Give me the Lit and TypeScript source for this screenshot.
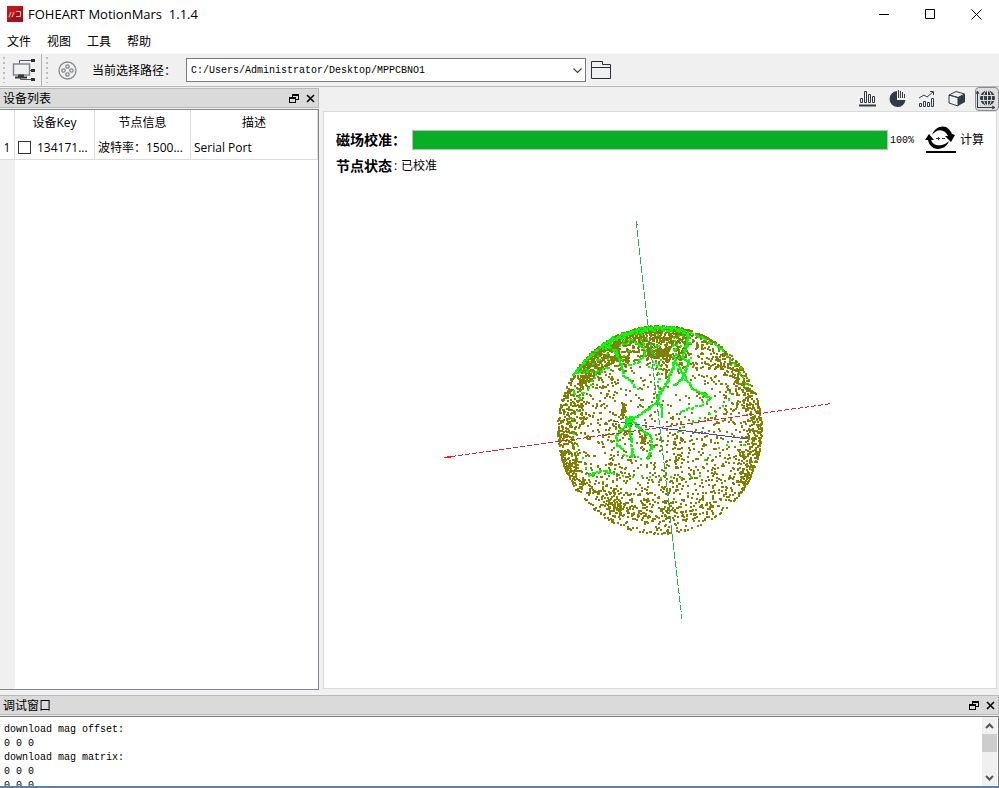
import { LitElement, html, svg, css } from "lit";
import { customElement } from "lit/decorators.js";

type Point = [number, number];

// Small seeded generator, so the cloud looks the same on every load.
function seeded(seed: number) {
  let s = seed;
  return () => {
    s = (s + 0x6d2b79f5) | 0;
    let t = Math.imul(s ^ (s >>> 15), 1 | s);
    t = (t + Math.imul(t ^ (t >>> 7), 61 | t)) ^ t;
    return ((t ^ (t >>> 14)) >>> 0) / 4294967296;
  };
}

const RADIUS = 102;
const square = (x: number, y: number, s = 2) =>
  `M${Math.round(x)} ${Math.round(y)}h${s}v${s}h-${s}z`;

function samples(): string {
  const rnd = seeded(71);
  const out: string[] = [];
  const put = (x: number, y: number) => {
    const d = Math.hypot(x, y);
    if (d > RADIUS) return;
    // the lower rim is sparse
    if (d > 92 && y > 55 && Math.abs(x) < 78 && rnd() < 0.55) return;
    out.push(square(x - 1, y * 1.02 - 1));
  };
  // even spread over the sphere's surface
  for (let i = 0; i < 2600; i++) {
    const z = rnd() * 2 - 1;
    const a = rnd() * Math.PI * 2;
    const r = RADIUS * Math.sqrt(1 - z * z);
    const x = r * Math.cos(a);
    const y = r * Math.sin(a);
    if (Math.hypot(x - 5, y + 35) < 45 && rnd() < 0.4) continue;
    put(x, y);
  }
  // rim
  for (let i = 0; i < 480; i++) {
    const a = rnd() * Math.PI * 2;
    const r = RADIUS - 14 * rnd();
    if (a > 0.8 && a < 2.5) continue;
    put(r * Math.cos(a), r * Math.sin(a));
  }
  // dense cap at the upper left
  for (let i = 0; i < 800; i++) {
    const x = -82 + rnd() * 108;
    const top = -Math.sqrt(RADIUS * RADIUS - x * x);
    const y = top + rnd() * (x < -40 ? 26 : 32);
    if (Math.hypot((x + 28) / 12, (y + 78) / 8) < 1 && rnd() < 0.7) continue;
    put(x, y);
  }
  // clumps: centre x, centre y, spread x, spread y, count
  const clumps = [
    [-1, -76, 11, 4, 70], [-36, -19, 2, 8, 26], [-17, 9, 3, 5, 20],
    [5, -62, 4, 12, 30], [-48, 68, 9, 14, 50], [-32, 78, 20, 9, 50],
    [-90, 24, 7, 24, 60], [86, 42, 7, 22, 60], [45, -63, 26, 3, 46],
    [18, 30, 5, 30, 40], [-82, -16, 8, 14, 36], [84, -42, 9, 22, 40],
    [0, 80, 50, 10, 80],
  ];
  for (const [cx, cy, sx, sy, n] of clumps) {
    for (let i = 0; i < n; i++) {
      put(cx + (rnd() * 2 - 1) * sx, cy + (rnd() * 2 - 1) * sy);
    }
  }
  return out.join("");
}

// Recorded motion trails: step between dots, scatter, then the vertices.
const TRAILS: [number, number, Point[]][] = [
  [1, 1, [[-87, -57], [-72, -74], [-57, -87], [-40, -96], [-20, -102], [-3, -104], [13, -103], [24, -98]]],
  [1, 2, [[-57, -85], [-40, -94], [-20, -100], [-3, -102], [16, -102], [22, -99]]],
  [2, 1, [[24, -99], [38, -94], [53, -87], [62, -80]]],
  [5, 2, [[62, -80], [78, -62], [90, -40]]],
  [1, 1, [[-57, -86], [-45, -80], [-40, -67], [-37, -55], [-30, -50]]],
  [2, 1, [[-30, -50], [-23, -40]]],
  [2, 1, [[-40, -85], [-30, -91], [-18, -85], [-16, -77], [-22, -68], [-33, -65]]],
  [1, 1, [[27, -98], [25, -83], [21, -73], [28, -70], [22, -53], [13, -45]]],
  [2, 2, [[15, -92], [13, -70]]],
  [1, 1, [[13, -70], [20, -60], [32, -42]]],
  [1, 1, [[32, -42], [50, -33]]],
  [2, 1, [[50, -32], [40, -26], [18, -19]]],
  [1, 1, [[14, -70], [8, -52], [-3, -33], [-4, -28], [-23, -15], [-32, -10]]],
  [1, 0, [[-3, -30], [1, -22], [1, -13]]],
  [3, 2, [[-12, -62], [-4, -70], [-2, -54], [0, -35]]],
  [1, 4, [[-34, -10], [-29, -9]]],
  [1, 1, [[-33, -8], [-45, 5], [-43, 14], [-38, 20]]],
  [1, 1, [[-33, -8], [-30, 10], [-28, 26]]],
  [1, 1, [[-27, -8], [-10, 6], [-9, 16], [-13, 29]]],
  [4, 2, [[-36, 24], [-26, 23], [-14, 29]]],
  [1, 1, [[-72, 44], [-57, 40], [-47, 43]]],
  [9, 1, [[-47, 44], [-10, 46], [30, 47], [50, 43]]],
  [2, 1, [[-87, -57], [-74, -60], [-66, -58], [-50, -64]]],
  [3, 2, [[-88, -40], [-82, -31], [-70, -46], [-62, -60]]],
  [4, 3, [[-78, -62], [-64, -72], [-52, -76]]],
  [8, 3, [[-86, -20], [-88, 0], [-84, 22], [-70, 42]]],
  [7, 3, [[70, -38], [58, -22], [40, -14], [14, 6]]],
  [9, 6, [[48, 28], [60, 18], [86, 8]]],
];

function trails(): string {
  const rnd = seeded(9);
  const out: string[] = [];
  const put = (x: number, y: number) => {
    if (Math.hypot(x, y / 1.02) <= RADIUS + 3) out.push(square(x, y));
  };
  for (const [step, jitter, pts] of TRAILS) {
    for (let i = 1; i < pts.length; i++) {
      const [x0, y0] = pts[i - 1];
      const [x1, y1] = pts[i];
      const n = Math.max(1, Math.round(Math.hypot(x1 - x0, y1 - y0) / step));
      for (let k = 0; k < n; k++) {
        const t = k / n;
        put(
          x0 + (x1 - x0) * t + (rnd() * 2 - 1) * jitter,
          y0 + (y1 - y0) * t + (rnd() * 2 - 1) * jitter
        );
      }
    }
  }
  for (let i = 0; i < 22; i++) put(-36 + rnd() * 9, -14 + rnd() * 6);
  for (let i = 0; i < 45; i++) put(-70 + rnd() * 110, -96 + rnd() * 26);
  return out.join("");
}

@customElement("magnetic-sphere")
class MagneticSphere extends LitElement {
  static styles = css`
    :host { display: block; }
    svg { display: block; width: 440px; height: 410px; max-width: 100%; }
  `;
  render() {
    return html`<svg viewBox="-220 -215 440 410" role="img" aria-label="磁场校准" shape-rendering="crispEdges" fill="none">
      <path d=${samples()} fill="#808000"></path>
      <path d=${trails()} fill="#00ff00"></path>
      <path d="M-24-209L22 189" stroke="#22b14c" stroke-dasharray="7 2"></path>
      <path d="M-24-206h2" stroke="#22b14c"></path>
      <path d="M-216 27.500L172-26.500" stroke="#ed1c24" stroke-dasharray="5 2"></path>
      <path d="M-216 27.500h7M-213 26.500h4" stroke="#ed1c24"></path>
      <path d="M-46-8.500L16 0" stroke="#3f48cc" stroke-dasharray="5 2"></path>
      <path d="M10-1L88 9" stroke="#3f48cc"></path>
    </svg>`;
  }
}

const floatIcon = svg`<path d="M3.500 3V.500h6v5H7M.500 3.500h6v5h-6z" stroke="#000"/><path d="M3 1h7M0 4h7" stroke="#000" stroke-width="2"/>`;
const crossIcon = svg`<path d="M1 1l7 7M8 1l-7 7" stroke="#000" stroke-width="1.600"/>`;

@customElement("dock-title")
class DockTitle extends LitElement {
  static properties = { label: { type: String } };
  declare label: string;
  static styles = css`
    :host { display: block; }
    .bar {
      display: flex; align-items: center; box-sizing: border-box; height: 20px;
      padding: 0 0 0 3px; background: #dadada; border: 1px solid #b9b9b9; border-left: 0;
    }
    h2 { flex: 1; margin: 0; padding-top: 2px; font-size: 12px; font-weight: 400; line-height: 16px; }
    button { width: 16px; height: 16px; padding: 0; border: 0; background: none; display: grid; place-items: center; }
  `;
  render() {
    return html`<div class="bar">
      <h2>${this.label}</h2>
      <button aria-label="浮动"><svg width="10" height="9" fill="none" shape-rendering="crispEdges">${floatIcon}</svg></button>
      <button aria-label="关闭"><svg width="9" height="9" fill="none">${crossIcon}</svg></button>
    </div>`;
  }
}

@customElement("app-root")
class AppRoot extends LitElement {
  static styles = css`
    :host {
      display: flex; flex-direction: column; height: 100vh; overflow: hidden;
      background: #f0f0f0; color: #000;
      font: 12px/16px "Open Sans", "Noto Sans CJK SC", sans-serif;
    }
    * { box-sizing: border-box; }
    button { font: inherit; color: inherit; background: none; border: 0; padding: 0; }
    svg { display: block; fill: none; }

    .titlebar { display: flex; align-items: center; height: 28px; padding-left: 7px; background: #fff; flex: none; }
    .titlebar h1 { flex: 1; margin: 0 0 0 5px; font-size: 13px; font-weight: 400; white-space: pre; }
    .win { width: 46px; height: 28px; display: grid; place-items: center; }
    .menubar { display: flex; gap: 16px; height: 25px; padding: 2px 0 0 7px; background: #fff; flex: none; }

    .toolbar { display: flex; align-items: center; height: 34px; flex: none; border-top: 1px solid #f8f8f8; border-bottom: 1px solid #b9b9b9; }
    .grip { width: 2px; height: 26px; margin-left: 3px; background: repeating-linear-gradient(#bdbdbd 0 2px, #f0f0f0 2px 5px); }
    .devices { margin-left: 7px; padding-right: 5px; height: 32px; display: grid; place-items: center; border-right: 1px solid #b4b4b4; }
    .devices + .grip { margin-left: 4px; }
    .record { margin: 0 15px 0 10px; }
    .path-label { width: 94px; padding-top: 2px; }
    .combo { position: relative; flex: 0 1 400px; height: 24px; }
    .combo select {
      appearance: none; width: 100%; height: 24px; padding: 2px 24px 0 4px; border: 1px solid #7a7a7a;
      border-radius: 0; background: #fff; color: #000; font: 10px/20px "Liberation Mono", monospace;
    }
    .combo svg { position: absolute; right: 4px; top: 10px; pointer-events: none; }
    .folder { margin-left: 5px; }

    .main { display: flex; flex: 1; min-height: 0; gap: 4px; }
    .dock { display: flex; flex-direction: column; width: 319px; flex: none; padding-top: 1px; }
    .list {
      flex: 1; margin-top: 1px; border: 1px solid #828790; border-left: 0;
      background: linear-gradient(90deg, #f0f0f0 15px, #fff 15px);
    }
    table { width: 100%; table-layout: fixed; border-collapse: separate; border-spacing: 0; background: #fff; }
    th, td { height: 25px; padding: 1px 3px 0; border-right: 1px solid #dcdcdc; font-weight: 400; white-space: nowrap; }
    td { border-bottom: 1px solid #dcdcdc; text-align: left; }
    .index { width: 15px; padding: 1px 0 0; text-align: center; }
    .key { width: 80px; }
    .info { width: 96px; }
    .cell { display: flex; align-items: center; gap: 6px; }
    .cell input { appearance: none; flex: none; width: 13px; height: 13px; margin: 0; border: 1px solid #333; background: #fff; }

    .work { display: flex; flex-direction: column; flex: 1; min-width: 0; padding-right: 2px; }
    .tabs { display: flex; justify-content: flex-end; align-items: center; gap: 6px; height: 24px; flex: none; margin-right: -2px; }
    .tab { width: 24px; height: 24px; display: grid; place-items: center; }
    .tab.on { border: 1px solid #8a8a8a; border-radius: 4px; background: #dedede; }
    .page { flex: 1; min-height: 0; margin-bottom: 1px; overflow: hidden; background: #fff; border: 1px solid #dadada; padding: 12px 12px 0; }
    .row { display: flex; align-items: center; height: 32px; }
    .caption { font-size: 14px; font-weight: 700; line-height: 18px; }
    .row .caption { width: 76px; }
    progress { appearance: none; flex: 1; min-width: 0; height: 20px; border: 1px solid #bcbcbc; background: #e6e6e6; }
    progress::-webkit-progress-bar { background: #e6e6e6; }
    progress::-webkit-progress-value { background: #06b025; }
    .percent { width: 37px; padding: 2px 0 0 2px; font: 10px/16px "Liberation Mono", monospace; }
    .calc { display: flex; align-items: center; gap: 4px; }
    .state { display: flex; align-items: center; height: 20px; }
    .sep { width: 9px; padding-left: 2px; }
    .plot { display: flex; justify-content: center; padding-top: 39px; }

    .log { flex: none; padding-top: 5px; border-bottom: 1px solid #3c8bdc; }
    .log-box { display: flex; height: 71px; margin-top: 1px; border: 1px solid #7a7a7a; border-left: 0; background: #fff; }
    textarea {
      flex: 1; min-width: 0; height: 69px; padding: 6px 4px 0; border: 0; margin: 0; resize: none; overflow: hidden;
      background: #fff; color: #000; font: 10px/14px "Liberation Mono", monospace;
    }
    .scroll { display: flex; flex-direction: column; justify-content: space-between; align-items: center; width: 15px; margin-right: 1px; background: #f0f0f0; }
    .scroll button { width: 15px; height: 17px; display: grid; place-items: center; }
    .thumb { width: 15px; height: 18px; background: #cdcdcd; margin-bottom: auto; }
  `;

  render() {
    return html`
      <header class="titlebar">
        <svg width="16" height="16"><path d="M0 0h16v16H0z" fill="#c4161c"/><path d="M0 16L16 0v16z" fill="#a31217"/><path d="M2 11l2-5M5 11l2-5M9 5.500h4.500v5H9" stroke="#f3c9c9"/></svg>
        <h1>FOHEART MotionMars  1.1.4</h1>
        <button class="win" aria-label="最小化"><svg width="10" height="11"><path d="M0 5.500h10" stroke="#000"/></svg></button>
        <button class="win" aria-label="最大化"><svg width="10" height="10"><path d="M.500.500h9v9h-9z" stroke="#000"/></svg></button>
        <button class="win" aria-label="关闭"><svg width="11" height="11"><path d="M.500.500l10 10M10.500.500l-10 10" stroke="#000"/></svg></button>
      </header>
      <nav class="menubar">
        <button>文件</button><button>视图</button><button>工具</button><button>帮助</button>
      </nav>
      <div class="toolbar">
        <span class="grip"></span>
        <button class="devices" aria-label="设备">
          <svg width="24" height="24"><path d="M1.500 6h16v11h-16z" stroke="#83878c" stroke-width="1.500"/><path d="M7.500 5.500v-3H20M18 12.500h3M8.500 19v2.500H20" stroke="#555b63"/><path d="M6 17.500h6M3 19.500h12" stroke="#343b44" stroke-width="2"/><path d="M19 1h4v3h-4zM19 11h4v3h-4zM19 20h4v3h-4z" fill="#2b3038"/></svg>
        </button>
        <span class="grip"></span>
        <button class="record" aria-label="录制">
          <svg width="19" height="19" stroke="#85898d" stroke-width="1.300"><circle cx="9.500" cy="9.500" r="8.500"/><circle cx="9.500" cy="5.500" r="1.700"/><circle cx="9.500" cy="13.500" r="1.700"/><circle cx="5.500" cy="9.500" r="1.700"/><circle cx="13.500" cy="9.500" r="1.700"/></svg>
        </button>
        <label class="path-label" for="path">当前选择路径：</label>
        <div class="combo">
          <select id="path"><option>C:/Users/Administrator/Desktop/MPPCBNO1</option></select>
          <svg width="9" height="6"><path d="M.500.500l4 4 4-4" stroke="#444" stroke-width="1.200"/></svg>
        </div>
        <button class="folder" aria-label="打开目录"><svg width="20" height="18"><path d="M.500.500h11v3h8v14H.500zM.500 6.500h19" stroke="#2b3038"/></svg></button>
      </div>

      <main class="main">
        <section class="dock">
          <dock-title label="设备列表"></dock-title>
          <div class="list">
            <table>
              <thead><tr><th class="index"></th><th class="key">设备Key</th><th class="info">节点信息</th><th>描述</th></tr></thead>
              <tbody><tr>
                <td class="index">1</td>
                <td><div class="cell"><input id="dev" type="checkbox"><label for="dev">134171...</label></div></td>
                <td>波特率：1500...</td>
                <td>Serial Port</td>
              </tr></tbody>
            </table>
          </div>
        </section>

        <section class="work">
          <div class="tabs">
            <button class="tab" aria-label="柱状图"><svg width="18" height="18" stroke="#343b44"><path d="M2.500 8.500h2v4h-2zM6.500 1.500h2v11h-2zM10.500 4.500h2v8h-2zM14.500 6.500h2v6h-2z"/><path d="M1 15.500h17" stroke-width="2"/></svg></button>
            <button class="tab" aria-label="饼图"><svg width="18" height="18"><path d="M9 1a8 8 0 1 0 8.500 9H9z" fill="#343b44"/><path d="M10.500 0v8M12.500 1v7M14.500 2v6M16.500 4v4" stroke="#343b44"/></svg></button>
            <button class="tab" aria-label="趋势"><svg width="18" height="18" stroke="#343b44"><path d="M1.500 13.500h2v3h-2zM5.500 11.500h2v5h-2zM9.500 12.500h2v4h-2zM13.500 8.500h2v8h-2z"/><path d="M1 8l5-3 3 2 6-5M12 1.500h3.500V5"/></svg></button>
            <button class="tab" aria-label="立体"><svg width="18" height="18"><path d="M1 5l7-3.500L16.500 4 10 7.500z" stroke="#343b44"/><path d="M1 5v8l9 3V7.500z" stroke="#343b44"/><path d="M10 7.500L17 4v8l-7 4z" fill="#343b44"/></svg></button>
            <button class="tab on" aria-label="磁场"><svg width="22" height="22" stroke="#343b44"><path d="M1.500 20V4M0 6l1.500-3L3 6M1 19.500h17M16 18l3 1.500-3 1.500"/><circle cx="11.500" cy="10" r="7.500" fill="#343b44" stroke="none"/><path d="M4 7.500h15M4 12.500h15M11.500 2v16" stroke="#dedede"/><ellipse cx="11.500" cy="10" rx="4" ry="7.500" stroke="#dedede"/></svg></button>
          </div>
          <div class="page">
            <div class="row">
              <label class="caption" for="calib">磁场校准：</label>
              <progress id="calib" max="100" value="100"></progress>
              <span class="percent">100%</span>
              <button class="calc">
                <svg width="31" height="28"><path d="M4 8l5 6H6c2 5 7 6 11 5 3-1 5-2 7-4-2 6-7 8-12 8-5-1-8-4-9-9H0z" fill="#000"/><path d="M7 9C9 2 16-1 21 1c3 2 5 4 6 7l3 1-4 7-6-6h3C20 3 12 2 7 9z" fill="#000"/><path d="M11 12.500h4M13.500 11v3M17 12.500h3" stroke="#333"/><path d="M1 26h30" stroke="#000" stroke-width="2"/></svg>
                计算
              </button>
            </div>
            <div class="state"><span class="caption">节点状态</span><span class="sep">:</span><span>已校准</span></div>
            <div class="plot"><magnetic-sphere></magnetic-sphere></div>
          </div>
        </section>
      </main>

      <section class="log">
        <dock-title label="调试窗口"></dock-title>
        <div class="log-box">
          <textarea readonly aria-label="调试窗口" .value=${"download mag offset:\n0 0 0\ndownload mag matrix:\n0 0 0\n0 0 0\n0 0 0"}></textarea>
          <div class="scroll">
            <button aria-label="向上"><svg width="9" height="6"><path d="M1 5l3.500-3.500L8 5" stroke="#555" stroke-width="2"/></svg></button>
            <div class="thumb"></div>
            <button aria-label="向下"><svg width="9" height="6"><path d="M1 1l3.500 3.500L8 1" stroke="#555" stroke-width="2"/></svg></button>
          </div>
        </div>
      </section>
    `;
  }
}
